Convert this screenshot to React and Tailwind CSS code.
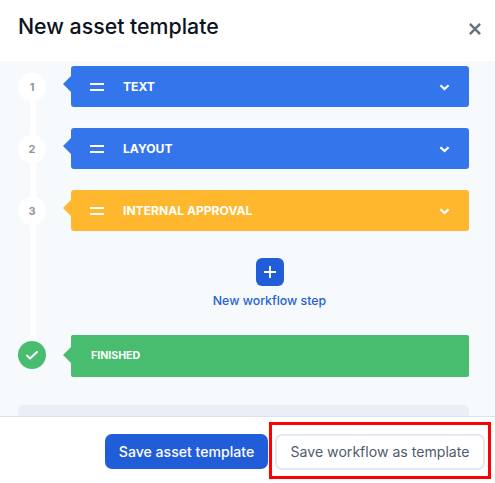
const steps = [
  { number: 1, label: "TEXT", bar: "bg-[#3575ec]", arrow: "text-[#3575ec]" },
  { number: 2, label: "LAYOUT", bar: "bg-[#3575ec]", arrow: "text-[#3575ec]" },
  { number: 3, label: "INTERNAL APPROVAL", bar: "bg-[#ffb82e]", arrow: "text-[#ffb82e]" },
];

function Notch({ className }) {
  return (
    <svg className={`h-4 w-[9px] shrink-0 ${className}`} viewBox="0 0 9 16" fill="currentColor">
      <path d="M8 0h1v16H8L0 8z" />
    </svg>
  );
}

function Step({ number, label, bar, arrow }) {
  return (
    <div className="flex h-[41px] items-center">
      <div className="mt-px flex size-7 items-center justify-center rounded-full bg-white text-[11px] font-bold text-[#8e959c]">
        {number}
      </div>
      <Notch className={`-mt-[5px] ml-[17px] ${arrow}`} />
      <div className={`-ml-px flex h-full w-[398px] items-center rounded-[3px] pr-[19px] pl-[19px] text-white ${bar}`}>
        <svg className="mt-px h-[8px] w-[14px]" viewBox="0 0 14 8" fill="none" stroke="currentColor" strokeWidth="1.8">
          <path d="M0 1h14M0 7h14" />
        </svg>
        <span className="mt-px ml-[19px] text-[12.1px] font-bold whitespace-nowrap">{label}</span>
        <svg className="mt-0.5 ml-auto h-[7px] w-[11px]" viewBox="0 0 11 7" fill="none" stroke="currentColor" strokeWidth="2.2">
          <path d="M1.4 1.2l4.1 3.9 4.1-3.9" />
        </svg>
      </div>
    </div>
  );
}

export default function App() {
  return (
    <div className="flex h-[483px] w-[495px] flex-col overflow-hidden bg-white font-['Inter',sans-serif]">
      <header className="flex h-[61px] shrink-0 items-center justify-between pr-[14px] pl-[18px]">
        <h1 className="-mt-[9px] text-[21.3px] leading-7 font-medium text-[#0d1220]">New asset template</h1>
        <svg className="-mt-[3px] size-3" viewBox="0 0 12 12" fill="none" stroke="#64717e" strokeWidth="2.4">
          <path d="M.9.9l10.2 10.2M11.1.9L.9 11.1" />
        </svg>
      </header>

      <main className="relative flex h-[355px] shrink-0 flex-col overflow-hidden bg-[#f6fafd] pt-[5px] pl-[18px]">
        <div className="absolute top-[30px] left-[30px] h-[255px] w-1.5 bg-white" />
        <div className="relative flex flex-col gap-[21px]">
          {steps.map((step) => (
            <Step key={step.number} {...step} />
          ))}
        </div>

        <div className="mt-[27px] flex h-[50px] w-[503px] flex-col items-center self-start">
          <button className="flex size-7 shrink-0 items-center justify-center rounded-[6px] bg-[#215dd8]">
            <svg className="size-3" viewBox="0 0 12 12" stroke="white" strokeWidth="1.8">
              <path d="M6 0v12M0 6h12" />
            </svg>
          </button>
          <span className="mt-1.5 text-[12.35px] leading-[18px] font-medium text-[#2560d6]">New workflow step</span>
        </div>

        <div className="relative mt-[27px] flex h-[42px] shrink-0 items-center">
          <div className="-mt-[2px] flex size-7 items-center justify-center rounded-full bg-[#48bd6f]">
            <svg className="h-[9px] w-3" viewBox="0 0 12 9" fill="none" stroke="white" strokeWidth="2.1">
              <path d="M1 4.5l3 3L11 1" strokeLinecap="round" strokeLinejoin="round" />
            </svg>
          </div>
          <Notch className="-mt-[2px] ml-[17px] text-[#48bd6f]" />
          <div className="-ml-px flex h-full w-[398px] items-center rounded-[2px] bg-[#48bd6f] pl-5 text-[10.6px] font-bold text-white">
            FINISHED
          </div>
        </div>

        <div className="mt-7 h-10 w-[451px] shrink-0 rounded-[6px] bg-[#ebeef7]" />
      </main>

      <footer className="flex h-[67px] shrink-0 border-t border-[#dfe3e9] pt-[5px] pl-[105px]">
        <button className="mt-3 h-[35px] w-[163px] rounded-[7px] bg-[#215dd8] text-[14.1px] font-medium whitespace-nowrap text-white">
          Save asset template
        </button>
        <div className="ml-px h-[57px] w-[222px] border-3 border-[#fe0000] pt-[9px] pl-[3px]">
          <button className="h-[36px] w-[210px] rounded-[7px] border-2 border-[#e3e8f1] text-[14.1px] whitespace-nowrap text-[#4f5b6e]">
            Save workflow as template
          </button>
        </div>
      </footer>
    </div>
  );
}
